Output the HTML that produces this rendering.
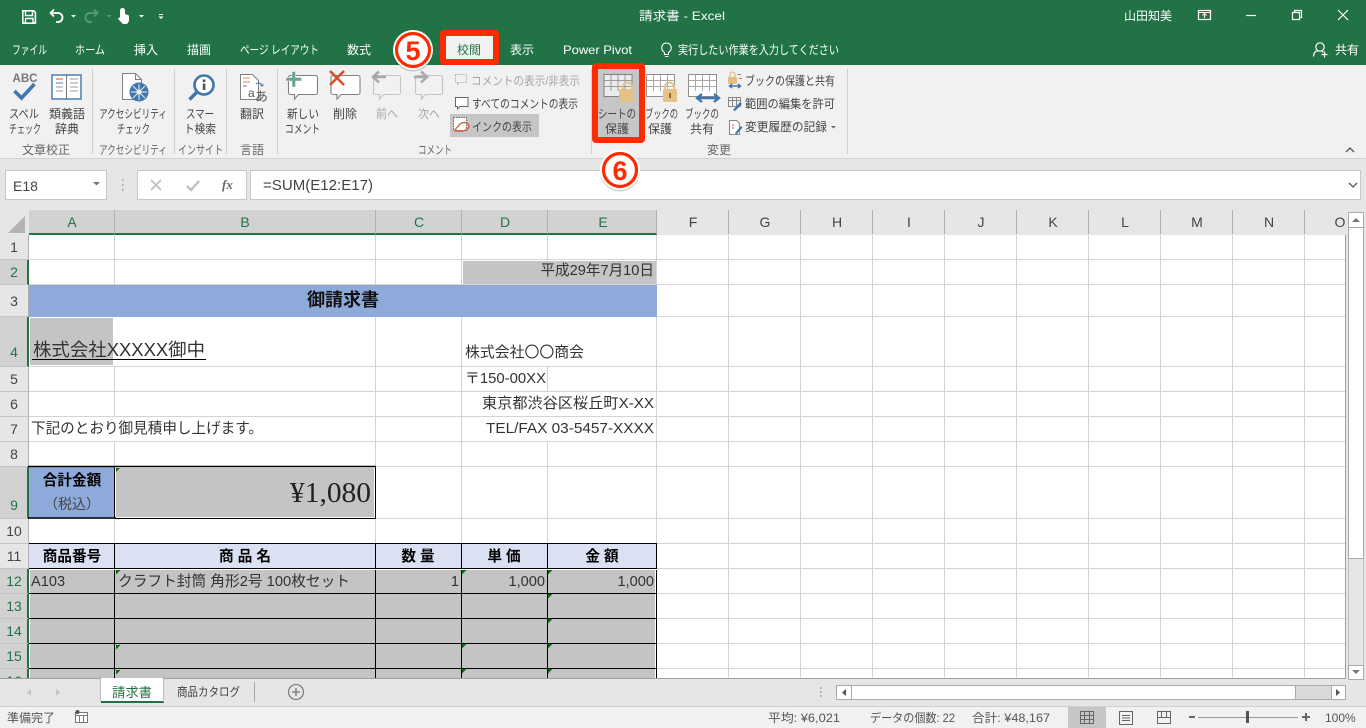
<!DOCTYPE html>
<html lang="ja"><head><meta charset="utf-8"><title>請求書 - Excel</title>
<style>
html,body{margin:0;padding:0;width:1366px;height:728px;overflow:hidden;background:#fff}
svg{display:block;position:absolute;left:0;top:0}
text{font-family:"Liberation Sans","Noto Sans CJK JP",sans-serif;font-size:12px;fill:#444}
.g{fill:#a6a6a6}
.lab{fill:#666;font-size:12px}
.c{text-anchor:middle}
.e{text-anchor:end}
.cell{font-size:14.6px;fill:#333}
.b{font-weight:bold;fill:#000;font-size:14.6px}
.hd{font-size:14px;text-anchor:middle;fill:#444}
.hs{font-size:14px;text-anchor:middle;fill:#217346}
.st{font-size:12px;fill:#555}
</style></head><body>
<svg width="1366" height="728" viewBox="0 0 1366 728" xmlns="http://www.w3.org/2000/svg">
<!-- title bar -->
<rect x="0" y="0" width="1366" height="65" fill="#217346"/>
<g fill="none" stroke="#fff" stroke-width="1.6">
<path d="M22.8 10.800h11l1.600 1.600v10.800h-12.600z"/><path d="M25.500 11v4.500h7V11M25.500 23v-4.500h7.500V23" stroke-width="1.400"/>
<path d="M54 9.500l-3.500 3.500 3.500 3.500M50.500 13h7.500a4.500 4.500 0 0 1 0 9H56" stroke-width="1.800"/>
<path d="M94 9.500l3.500 3.500-3.500 3.500M97.500 13h-7.500a4.500 4.500 0 0 0 0 9h2" stroke="#5c9a78" stroke-width="1.800"/>
</g>
<path d="M71 15l2.500 2.500L76 15zM139 15l2.500 2.500L144 15zM159 14h4v1h-4zM158.500 16.500l2.500 2.500 2.500-2.500z" fill="#fff"/>
<path d="M106.500 15l2.500 2.500 2.500-2.500z" fill="#5c9a78"/>
<path d="M120 17V10.500a2.500 2.500 0 0 1 5 0V14l4 1.500V21l-2 3h-4l-4-4-1-2 2-.5z" fill="#fff"/>
<text x="639" y="20" style="font-size:12px;fill:#fff" textLength="86" lengthAdjust="spacingAndGlyphs">請求書 - Excel</text>
<text x="1124" y="20" style="font-size:12px;fill:#fff" textLength="48" lengthAdjust="spacingAndGlyphs">山田知美</text>
<g fill="none" stroke="#fff" stroke-width="1.200">
<rect x="1198.500" y="10.500" width="12" height="9"/><path d="M1198.500 12.500h12M1204.500 18v-4M1202.500 15.500l2-2 2 2" stroke-width="1"/>
<path d="M1246 15.500h10"/>
<path d="M1292.500 12.500h7v7h-7zM1294.500 12.500v-2h7v7h-2"/>
<path d="M1338 10l10 10M1348 10l-10 10"/>
<circle cx="1320" cy="47" r="4.200"/><path d="M1313.500 56.500c.5-4.500 2.500-5.500 4-5.500M1322 51.500l1.500.5M1324.500 51.500v6M1321.500 54.500h6"/>
</g>
<text x="12" y="54" style="fill:#fff" textLength="35" lengthAdjust="spacingAndGlyphs">ファイル</text>
<text x="75" y="54" style="fill:#fff" textLength="30" lengthAdjust="spacingAndGlyphs">ホーム</text>
<text x="134" y="54" style="fill:#fff" textLength="24" lengthAdjust="spacingAndGlyphs">挿入</text>
<text x="187" y="54" style="fill:#fff" textLength="24" lengthAdjust="spacingAndGlyphs">描画</text>
<text x="240" y="54" style="fill:#fff" textLength="79" lengthAdjust="spacingAndGlyphs">ページ レイアウト</text>
<text x="347" y="54" style="fill:#fff" textLength="24" lengthAdjust="spacingAndGlyphs">数式</text>
<text x="510" y="54" style="fill:#fff" textLength="24" lengthAdjust="spacingAndGlyphs">表示</text>
<text x="563" y="54" style="fill:#fff" textLength="69" lengthAdjust="spacingAndGlyphs">Power Pivot</text>
<text x="678" y="54" style="fill:#fff" textLength="161" lengthAdjust="spacingAndGlyphs">実行したい作業を入力してください</text>
<text x="1335" y="54" style="fill:#fff" textLength="24" lengthAdjust="spacingAndGlyphs">共有</text>
<path d="M664.500 54.500v-2c-5-3.500-2.500-9.500 2-9.500s7 6 2 9.500v2zM665 56.500h3.500" fill="none" stroke="#fff" stroke-width="1.100"/>

<!-- ribbon -->
<rect x="0" y="65" width="1366" height="93" fill="#f1f1f1"/>
<rect x="0" y="158" width="1366" height="1" fill="#d2d2d2"/>
<rect x="0" y="159" width="1366" height="51" fill="#e6e6e6"/>
<g fill="#d0d0d0">
<rect x="92" y="69" width="1" height="85"/><rect x="174" y="69" width="1" height="85"/><rect x="226" y="69" width="1" height="85"/><rect x="277" y="69" width="1" height="85"/><rect x="591" y="69" width="1" height="85"/><rect x="847" y="69" width="1" height="85"/>
</g>
<!-- spell -->
<text x="25" y="82" class="c" style="font-size:11.500px;font-weight:bold;fill:#777">ABC</text>
<path d="M14.500 91l7 7 13-14" fill="none" stroke="#3f77ac" stroke-width="3.600"/>
<!-- thesaurus -->
<rect x="52" y="75" width="29" height="24" fill="#fff" stroke="#4a7fb0" stroke-width="1.500"/>
<path d="M66.500 75v24" stroke="#777"/>
<path d="M56 79h7M56 83h7M56 87h7M56 91h7M70 79h8M70 83h8M70 87h8M70 91h8" stroke="#999"/>
<path d="M56 79h7" stroke="#d4532d"/><path d="M56 83h7" stroke="#4a7fb0"/>
<!-- accessibility -->
<path d="M122.500 73.500h13l6 6v20h-19z" fill="#fff" stroke="#808080"/><path d="M135.500 73.500v6h6" fill="none" stroke="#808080"/>
<circle cx="139" cy="92" r="9.500" fill="#3f77ac"/><circle cx="139" cy="92" r="2.500" fill="#f1f1f1"/><path d="M139 84v16M131 92h16M133 86l12 12M145 86l-12 12" stroke="#f1f1f1" stroke-width="1"/>
<!-- smart lookup -->
<circle cx="204" cy="85" r="9.500" fill="#fff" stroke="#3f77ac" stroke-width="2.600"/><path d="M197 92l-7.500 7.500" stroke="#3f77ac" stroke-width="3.400"/>
<rect x="202.800" y="83.500" width="2.600" height="6.500" fill="#555"/><rect x="202.800" y="79.500" width="2.600" height="2.500" fill="#555"/>
<!-- translate -->
<path d="M240.500 74.500h12l6 6v19h-18z" fill="#fff" stroke="#808080"/>
<path d="M243 78h7M243 82h7" stroke="#e08a4a"/><path d="M243 86h4" stroke="#4a7fb0"/>
<text x="248" y="97" style="font-size:12px;fill:#555">a</text><text x="255" y="101" style="font-size:13px;fill:#555">あ</text>
<path d="M256 84a3.500 3.500 0 0 1 6 2l-1.500-1M262 86l1.500-1.500" fill="none" stroke="#3f77ac"/>
<!-- comments -->
<g fill="#fff" stroke="#808080" stroke-width="1.100">
<path d="M290.500 75.500h25a2 2 0 0 1 2 2v15a2 2 0 0 1-2 2h-17l-4 4.500v-4.500h-4a2 2 0 0 1-2-2v-15a2 2 0 0 1 2-2z"/>
<path d="M333 75.500h25a2 2 0 0 1 2 2v15a2 2 0 0 1-2 2h-17l-4 4.500v-4.500h-4a2 2 0 0 1-2-2v-15a2 2 0 0 1 2-2z"/>
</g>
<g fill="#f1f1f1" stroke="#c4c4c4" stroke-width="1.100">
<path d="M375.500 75.500h23a2 2 0 0 1 2 2v15a2 2 0 0 1-2 2h-15l-4 4.500v-4.500h-4a2 2 0 0 1-2-2v-15a2 2 0 0 1 2-2z"/>
<path d="M417.500 75.500h23a2 2 0 0 1 2 2v15a2 2 0 0 1-2 2h-15l-4 4.500v-4.500h-4a2 2 0 0 1-2-2v-15a2 2 0 0 1 2-2z"/>
</g>
<path d="M292 71.500h3.500v6h6v3.500h-6v6H292v-6h-6v-3.500h6z" fill="#6aa58f" stroke="#f1f1f1" stroke-width=".5"/>
<path d="M330 71l14 14M344 71l-14 14" stroke="#d4532d" stroke-width="2.600"/>
<path d="M372 77h14M379 71.500l-6 5.500 6 5.500" fill="none" stroke="#a9a9a9" stroke-width="2.600"/>
<path d="M414 77h14M421 71.500l6 5.500-6 5.500" fill="none" stroke="#a9a9a9" stroke-width="2.600"/>
<path d="M455.500 74.500h11v8h-7l-2 2v-2h-2z" fill="none" stroke="#b5b5b5" stroke-dasharray="2 1"/>
<path d="M455.500 97.500h12.500v9h-8l-2.500 2.500v-2.500h-2z" fill="#fff" stroke="#666"/>
<rect x="450" y="114" width="89" height="23" fill="#c6c6c6"/>
<path d="M453.500 117.500h13v13h-13z" fill="#fff" stroke="#666" stroke-dasharray="1.500 1"/>
<path d="M454 131l6-7c4-3 9-1 9 2s-5 6-9 5h-5" fill="none" stroke="#d4532d" stroke-width="1.200"/>
<!-- protect icons -->
<g fill="none" stroke-width="1">
<path d="M646.500 74.500h28v22h-28z" fill="#fff" stroke="#909090"/><path d="M646.500 80.500h28M646.500 86.500h28M653.500 75v16M660.500 75v16M667.500 75v16" stroke="#a8a8a8"/>
<path d="M688.500 74.500h28v22h-28z" fill="#fff" stroke="#909090"/><path d="M688.500 80.500h28M688.500 86.500h28M695.500 75v16M702.500 75v16M709.500 75v16" stroke="#a8a8a8"/>
</g>
<!-- text ribbon -->
<text x="9" y="118" textLength="30" lengthAdjust="spacingAndGlyphs">スペル</text>
<text x="9" y="133" textLength="32" lengthAdjust="spacingAndGlyphs">チェック</text>
<text x="49" y="118" textLength="36" lengthAdjust="spacingAndGlyphs">類義語</text>
<text x="55" y="133" textLength="24" lengthAdjust="spacingAndGlyphs">辞典</text>
<text x="99" y="118" textLength="68" lengthAdjust="spacingAndGlyphs">アクセシビリティ</text>
<text x="117" y="133" textLength="33" lengthAdjust="spacingAndGlyphs">チェック</text>
<text x="186" y="118" textLength="28" lengthAdjust="spacingAndGlyphs">スマー</text>
<text x="184" y="133" textLength="32" lengthAdjust="spacingAndGlyphs">ト検索</text>
<text x="240" y="118" textLength="24" lengthAdjust="spacingAndGlyphs">翻訳</text>
<text x="287" y="118" textLength="32" lengthAdjust="spacingAndGlyphs">新しい</text>
<text x="285" y="133" textLength="35" lengthAdjust="spacingAndGlyphs">コメント</text>
<text x="333" y="118" textLength="24" lengthAdjust="spacingAndGlyphs">削除</text>
<text x="376" y="118" class="g" textLength="22" lengthAdjust="spacingAndGlyphs">前へ</text>
<text x="418" y="118" class="g" textLength="22" lengthAdjust="spacingAndGlyphs">次へ</text>
<text x="471" y="85" class="g" textLength="109" lengthAdjust="spacingAndGlyphs">コメントの表示/非表示</text>
<text x="472" y="108" textLength="106" lengthAdjust="spacingAndGlyphs">すべてのコメントの表示</text>
<text x="472" y="131" textLength="60" lengthAdjust="spacingAndGlyphs">インクの表示</text>
<text x="645" y="118" textLength="33" lengthAdjust="spacingAndGlyphs">ブックの</text>
<text x="648" y="133" textLength="24" lengthAdjust="spacingAndGlyphs">保護</text>
<text x="685" y="118" textLength="34" lengthAdjust="spacingAndGlyphs">ブックの</text>
<text x="690" y="133" textLength="24" lengthAdjust="spacingAndGlyphs">共有</text>
<text x="745" y="85" textLength="90" lengthAdjust="spacingAndGlyphs">ブックの保護と共有</text>
<text x="745" y="108" textLength="90" lengthAdjust="spacingAndGlyphs">範囲の編集を許可</text>
<text x="745" y="131" textLength="82" lengthAdjust="spacingAndGlyphs">変更履歴の記録</text>
<path d="M831 126l2.500 2.500 2.500-2.500z" fill="#666"/>
<text x="22" y="154" class="lab" textLength="48" lengthAdjust="spacingAndGlyphs">文章校正</text>
<text x="99" y="154" class="lab" textLength="68" lengthAdjust="spacingAndGlyphs">アクセシビリティ</text>
<text x="178" y="154" class="lab" textLength="45" lengthAdjust="spacingAndGlyphs">インサイト</text>
<text x="240" y="154" class="lab" textLength="24" lengthAdjust="spacingAndGlyphs">言語</text>
<text x="418" y="154" class="lab" textLength="34" lengthAdjust="spacingAndGlyphs">コメント</text>
<text x="707" y="154" class="lab" textLength="24" lengthAdjust="spacingAndGlyphs">変更</text>
<path d="M1346 152l4-4 4 4" fill="none" stroke="#555" stroke-width="1.300"/>
<!-- small change icons -->
<rect x="728" y="77" width="9" height="7" rx="1" fill="#e5bd7f"/><path d="M730 77v-2.500a2.500 2.500 0 0 1 5 0V77" fill="none" stroke="#d7ae72"/>
<path d="M737.500 74.500h3.500M739 78.500h3" stroke="#888"/>
<path d="M730 86h10M732 84l-2.500 2 2.500 2M738 84l2.500 2-2.500 2" fill="none" stroke="#3f77ac" stroke-width="1.500"/>
<path d="M728.500 97.500h12v9h-12zM728.500 100.500h12M732.500 98v8M736.500 98v8" fill="none" stroke="#888"/>
<path d="M733 110l7-8 2 2-7 7z" fill="#3f77ac"/>
<path d="M729.500 120.500h7l3 3v11h-10z" fill="#fff" stroke="#888"/><path d="M732 125h2M732 128h2" stroke="#d4532d"/><path d="M735 133l6-7 1.500 1.500-6 7z" fill="#3f77ac"/>

<!-- formula bar -->
<rect x="5.500" y="170.500" width="101" height="29" fill="#fff" stroke="#c6c6c6"/>
<text x="13" y="191" style="font-size:14px;fill:#444">E18</text>
<path d="M93 182l3.500 3.500 3.500-3.500z" fill="#777"/>
<path d="M122 179h1.500v2H122zM122 184h1.500v2H122zM122 189h1.500v2H122z" fill="#aaa"/>
<rect x="137.500" y="170.500" width="109" height="29" fill="#fff" stroke="#c6c6c6"/>
<rect x="250.500" y="170.500" width="1110" height="29" fill="#fff" stroke="#c6c6c6"/>
<path d="M151 180l10 10M161 180l-10 10" stroke="#bdbdbd" stroke-width="1.600"/>
<path d="M187 186l4 4 8-9" fill="none" stroke="#bdbdbd" stroke-width="2.200"/>
<text x="222" y="189" style="font-family:'Liberation Serif',serif;font-style:italic;font-weight:bold;font-size:13px;fill:#666">fx</text>
<text x="263" y="190" style="font-size:15px;fill:#444" textLength="110" lengthAdjust="spacingAndGlyphs">=SUM(E12:E17)</text>
<path d="M1349 183l4 4 4-4" fill="none" stroke="#555" stroke-width="1.300"/>

<!-- sheet background -->
<rect x="0" y="210" width="1346" height="25" fill="#e6e6e6"/>
<rect x="0" y="235" width="28" height="444" fill="#e6e6e6"/>
<rect x="1346" y="210" width="20" height="470" fill="#e6e6e6"/>
<rect x="29" y="235" width="1317" height="444" fill="#fff"/>
<rect x="28" y="235" width="1" height="444" fill="#b0b0b0"/>
<path d="M25 216v17h-17z" fill="#b4b4b4"/>
<rect x="29" y="210" width="628" height="24" fill="#d2d2d2"/>
<!-- selected row header -->
<g fill="#d2d2d2">
<rect x="0" y="260" width="27" height="25"/><rect x="0" y="317" width="27" height="50"/><rect x="0" y="467" width="27" height="52"/><rect x="0" y="569" width="27" height="110"/>
</g>
<g fill="#217346">
<rect x="29" y="233" width="628" height="2"/>
<rect x="27" y="260" width="2" height="25"/><rect x="27" y="317" width="2" height="50"/><rect x="27" y="467" width="2" height="52"/><rect x="27" y="569" width="2" height="110"/>
</g>
<!-- gridlines -->
<g stroke="#d4d4d4" stroke-width="1">
<path d="M29 259.500h1317M29 284.500h1317M29 316.500h1317M29 366.500h1317M29 391.500h1317M29 416.500h1317M29 441.500h1317M29 466.500h1317M29 518.500h1317M29 543.500h1317M29 568.500h1317M29 593.500h1317M29 618.500h1317M29 643.500h1317M29 668.500h1317"/>
<path d="M114.500 235v444M375.500 235v444M461.500 235v444M547.500 235v444M656.500 235v444M728.500 235v444M800.500 235v444M872.500 235v444M944.500 235v444M1016.500 235v444M1088.500 235v444M1160.500 235v444M1232.500 235v444M1304.500 235v444"/>
</g>
<!-- overflow text hides gridlines -->
<g fill="#fff">
<rect x="114" y="317" width="1" height="49"/><rect x="114" y="417" width="1" height="24"/>
<rect x="547" y="317" width="1" height="49"/><rect x="547" y="392" width="1" height="24"/><rect x="547" y="417" width="1" height="24"/>
</g>
<g stroke="#b0b0b0" stroke-width="1">
<path d="M114.500 210v24M375.500 210v24M461.500 210v24M547.500 210v24M656.500 210v24M728.500 210v24M800.500 210v24M872.500 210v24M944.500 210v24M1016.500 210v24M1088.500 210v24M1160.500 210v24M1232.500 210v24M1304.500 210v24"/>
<path d="M0 259.500h28M0 284.500h28M0 316.500h28M0 366.500h28M0 391.500h28M0 416.500h28M0 441.500h28M0 466.500h28M0 518.500h28M0 543.500h28M0 568.500h28M0 593.500h28M0 618.500h28M0 643.500h28M0 668.500h28" stroke="#c4c4c4"/>
</g>
<!-- fills -->
<rect x="29" y="285" width="628" height="32" fill="#8eaadb"/>
<rect x="463" y="261" width="193" height="23" fill="#c4c4c4"/>
<rect x="30" y="318" width="83" height="47" fill="#c4c4c4"/>
<rect x="29" y="467" width="86" height="51" fill="#8eaadb"/>
<rect x="116" y="468" width="258" height="49" fill="#c4c4c4"/>
<rect x="29" y="544" width="628" height="25" fill="#d9e1f2"/>
<rect x="30" y="570" width="625" height="109" fill="#c4c4c4"/>
<!-- black borders -->
<g stroke="#000" stroke-width="1" fill="none">
<path d="M28 466.500h348M28 518h88" stroke-width="1.500"/><path d="M114.500 466v52.500M375.500 466v53M115 518.500h261" />
<path d="M29 543.500h628M29 568.500h628M29 593.500h627M29 618.500h627M29 643.500h627M29 668.500h627M114.500 544v135M375.500 544v135M461.500 544v135M547.500 544v135M656.500 544v135"/>
</g>
<path d="M29 569.500h628" stroke="#fff" stroke-width="1"/>
<!-- error triangles -->
<g fill="#0c6e12">
<path d="M116 468h4l-4 4zM116 570h4.500l-4.500 4.500zM116 645h4.500l-4.500 4.500zM116 670h4.500l-4.500 4.500zM462 570h4.500l-4.500 4.500zM548 570h4.500l-4.500 4.500zM548 594h4.500l-4.500 4.500zM548 619h4.500l-4.500 4.500zM548 644h4.500l-4.500 4.500zM548 669h4.500l-4.500 4.500zM462 644h4.500l-4.500 4.500zM462 669h4.500l-4.500 4.500z"/>
</g>
<!-- headers -->
<text x="72" y="227" class="hs">A</text><text x="245" y="227" class="hs">B</text><text x="419" y="227" class="hs">C</text><text x="505" y="227" class="hs">D</text><text x="603" y="227" class="hs">E</text>
<text x="693" y="227" class="hd">F</text><text x="765" y="227" class="hd">G</text><text x="837" y="227" class="hd">H</text><text x="909" y="227" class="hd">I</text><text x="981" y="227" class="hd">J</text><text x="1053" y="227" class="hd">K</text><text x="1125" y="227" class="hd">L</text><text x="1197" y="227" class="hd">M</text><text x="1269" y="227" class="hd">N</text><text x="1340" y="227" class="hd">O</text>
<text x="14" y="252" class="hd">1</text><text x="14" y="277" class="hs">2</text><text x="14" y="306" class="hd">3</text><text x="14" y="357" class="hs">4</text><text x="14" y="384" class="hd">5</text><text x="14" y="409" class="hd">6</text><text x="14" y="434" class="hd">7</text><text x="14" y="459" class="hd">8</text><text x="14" y="510" class="hs">9</text><text x="14" y="536" class="hd">10</text><text x="14" y="561" class="hd">11</text><text x="14" y="586" class="hs">12</text><text x="14" y="611" class="hs">13</text><text x="14" y="636" class="hs">14</text><text x="14" y="661" class="hs">15</text><text x="14" y="686" class="hs">16</text>
<!-- cells -->
<text x="654" y="275" class="cell e">平成29年7月10日</text>
<text x="343" y="306" class="c" style="font-size:18px;font-weight:bold;fill:#111">御請求書</text>
<text x="33" y="356" style="font-size:18px;fill:#333" textLength="172" lengthAdjust="spacingAndGlyphs">株式会社XXXXX御中</text>
<rect x="32" y="359" width="174" height="1" fill="#000"/>
<text x="465" y="357" class="cell" textLength="119" lengthAdjust="spacingAndGlyphs">株式会社〇〇商会</text>
<text x="465" y="383" class="cell" textLength="81" lengthAdjust="spacingAndGlyphs">〒150-00XX</text>
<text x="654" y="408" class="cell e" textLength="172" lengthAdjust="spacingAndGlyphs">東京都渋谷区桜丘町X-XX</text>
<text x="654" y="433" class="cell e" textLength="168" lengthAdjust="spacingAndGlyphs">TEL/FAX 03-5457-XXXX</text>
<text x="31" y="433" class="cell" textLength="232" lengthAdjust="spacingAndGlyphs">下記のとおり御見積申し上げます。</text>
<text x="72" y="485" class="b c">合計金額</text>
<text x="72" y="509" class="c" style="font-size:14px;fill:#444">（税込）</text>
<text x="371" y="502" class="e" style="font-family:'Liberation Serif',serif;font-size:29px;fill:#222" textLength="81" lengthAdjust="spacingAndGlyphs">¥1,080</text>
<text x="72" y="561" class="b c">商品番号</text>
<text x="245" y="561" class="b c">商 品 名</text>
<text x="418" y="561" class="b c">数 量</text>
<text x="504" y="561" class="b c">単 価</text>
<text x="602" y="561" class="b c">金 額</text>
<text x="31" y="586" class="cell">A103</text>
<text x="118" y="586" class="cell" textLength="232" lengthAdjust="spacingAndGlyphs">クラフト封筒 角形2号 100枚セット</text>
<text x="459" y="586" class="cell e">1</text>
<text x="545" y="586" class="cell e">1,000</text>
<text x="654" y="586" class="cell e">1,000</text>
<!-- sheet edge -->
<rect x="0" y="678" width="1346" height="1" fill="#a0a0a0"/>
<rect x="1345" y="235" width="1" height="444" fill="#a0a0a0"/>
<rect x="0" y="679" width="1366" height="28" fill="#e6e6e6"/>
<!-- v scrollbar -->
<rect x="1348.500" y="212.500" width="15" height="467" fill="#e6e6e6" stroke="#c0c0c0"/>
<rect x="1348.500" y="212.500" width="15" height="15" fill="#fff" stroke="#ababab"/>
<rect x="1348.500" y="227.500" width="15" height="331" fill="#fff" stroke="#ababab"/>
<rect x="1348.500" y="665.500" width="15" height="14" fill="#fff" stroke="#ababab"/>
<path d="M1352 222l4-4 4 4zM1352 670l4 4 4-4z" fill="#777"/>
<!-- tabs -->
<rect x="101" y="678" width="62" height="25" fill="#fff"/>
<rect x="101" y="701" width="63" height="2" fill="#217346"/><rect x="100" y="679" width="1" height="23" fill="#bdbdbd"/><rect x="163" y="679" width="1" height="23" fill="#bdbdbd"/>
<text x="112" y="697" style="font-size:13px;fill:#217346" textLength="40" lengthAdjust="spacingAndGlyphs">請求書</text>
<text x="177" y="696" style="font-size:12px;fill:#444" textLength="63" lengthAdjust="spacingAndGlyphs">商品カタログ</text>
<rect x="254" y="682" width="1" height="20" fill="#a8a8a8"/>
<circle cx="296" cy="692" r="7.500" fill="none" stroke="#808080" stroke-width="1.300"/><path d="M296 688v8M292 692h8" stroke="#808080" stroke-width="1.500"/>
<path d="M31 689l-4 3.500 4 3.500zM56 689l4 3.500-4 3.500z" fill="#c4c4c4"/>
<path d="M820 687h1.500v2H820zM820 691h1.500v2H820zM820 695h1.500v2H820z" fill="#aaa"/>
<!-- h scrollbar -->
<rect x="836.500" y="685.500" width="509" height="14" fill="#dadada" stroke="#ababab"/>
<rect x="836.500" y="685.500" width="15" height="14" fill="#fff" stroke="#ababab"/>
<rect x="851.500" y="685.500" width="444" height="14" fill="#fff" stroke="#ababab"/>
<rect x="1331.500" y="685.500" width="14" height="14" fill="#fff" stroke="#ababab"/>
<path d="M846 689l-4 3.500 4 3.500zM1336 689l4 3.500-4 3.500z" fill="#555"/>
<!-- status -->
<rect x="0" y="706" width="1366" height="22" fill="#f1f1f1"/>
<rect x="0" y="706" width="1366" height="1" fill="#d0d0d0"/>
<text x="7" y="722" class="st" textLength="48" lengthAdjust="spacingAndGlyphs">準備完了</text>
<path d="M75.500 712.500h12v10h-12z M75.500 715.500h12M79.500 716v6M83.500 716v6" fill="#fff" stroke="#777"/><circle cx="77.500" cy="712" r="2" fill="#555"/>
<text x="768" y="722" class="st" textLength="72" lengthAdjust="spacingAndGlyphs">平均: ¥6,021</text>
<text x="870" y="722" class="st" textLength="85" lengthAdjust="spacingAndGlyphs">データの個数: 22</text>
<text x="972" y="722" class="st" textLength="78" lengthAdjust="spacingAndGlyphs">合計: ¥48,167</text>
<rect x="1068" y="707" width="38" height="21" fill="#c6c6c6"/>
<path d="M1080.500 711.500h13v12h-13zM1080.500 715.500h13M1080.500 719.500h13M1084.500 712v11M1089.500 712v11" fill="none" stroke="#666"/>
<path d="M1119.500 711.500h13v13h-13z" fill="none" stroke="#666"/><path d="M1122 715.500h8M1122 718h8M1122 720.500h8" stroke="#666"/>
<path d="M1157.500 711.500h13v12h-13zM1157.500 717.500h13M1161.500 712v5M1166.500 712v5" fill="none" stroke="#666"/>
<rect x="1189" y="716" width="6" height="2" fill="#666"/>
<rect x="1198" y="717" width="100" height="1" fill="#999"/>
<rect x="1246" y="711" width="3" height="12" fill="#555"/>
<path d="M1302 717h8M1306 713v8" stroke="#666" stroke-width="2"/>
<text x="1325" y="722" class="st">100%</text>

<!-- annotations -->
<rect x="443" y="33" width="53" height="29" fill="#f1f1f1" stroke="#ff2a00" stroke-width="6" rx="1"/>
<text x="457" y="54" style="fill:#217346" textLength="24" lengthAdjust="spacingAndGlyphs">校閲</text>
<rect x="595" y="66" width="47" height="74" fill="#c6c6c6" stroke="#ff2a00" stroke-width="6" rx="1"/>
<path d="M604 74.500h28v22h-28z" fill="#ececec" stroke="#808080"/><path d="M604 80.500h28M604 86.500h28M611 75v16M618 75v16M625 75v16" stroke="#9a9a9a" fill="none"/>
<path d="M623 89v-2a4.500 4.500 0 0 1 9 0v2" fill="none" stroke="#e5c287" stroke-width="2"/><rect x="619" y="89" width="14" height="13" rx="1" fill="#e5c287"/>
<path d="M665 89v-2a4.500 4.500 0 0 1 9 0v2" fill="none" stroke="#e5c287" stroke-width="2"/><rect x="663" y="89" width="14" height="13" rx="1" fill="#e5c287"/><rect x="669" y="93" width="2" height="5" fill="#8c6a33"/>
<path d="M698 98h20M702 94l-5 4 5 4M714 94l5 4-5 4" fill="none" stroke="#3f77ac" stroke-width="2.400"/>
<text x="598" y="118" style="fill:#444" textLength="38" lengthAdjust="spacingAndGlyphs">シートの</text>
<text x="605" y="133" style="fill:#444" textLength="24" lengthAdjust="spacingAndGlyphs">保護</text>
<circle cx="413" cy="51.500" r="20" fill="#000" opacity=".18"/><circle cx="413" cy="50" r="20" fill="#fff"/>
<circle cx="413" cy="50" r="16.500" fill="none" stroke="#ff2a00" stroke-width="3.200"/>
<text x="413" y="60" class="c" style="font-size:27px;font-weight:bold;fill:#ff2a00">5</text>
<circle cx="620" cy="171.500" r="20" fill="#000" opacity=".18"/><circle cx="620" cy="170" r="20" fill="#fff"/>
<circle cx="620" cy="170" r="16.500" fill="none" stroke="#ff2a00" stroke-width="3.200"/>
<text x="620" y="180" class="c" style="font-size:27px;font-weight:bold;fill:#ff2a00">6</text>
</svg>
</body></html>
